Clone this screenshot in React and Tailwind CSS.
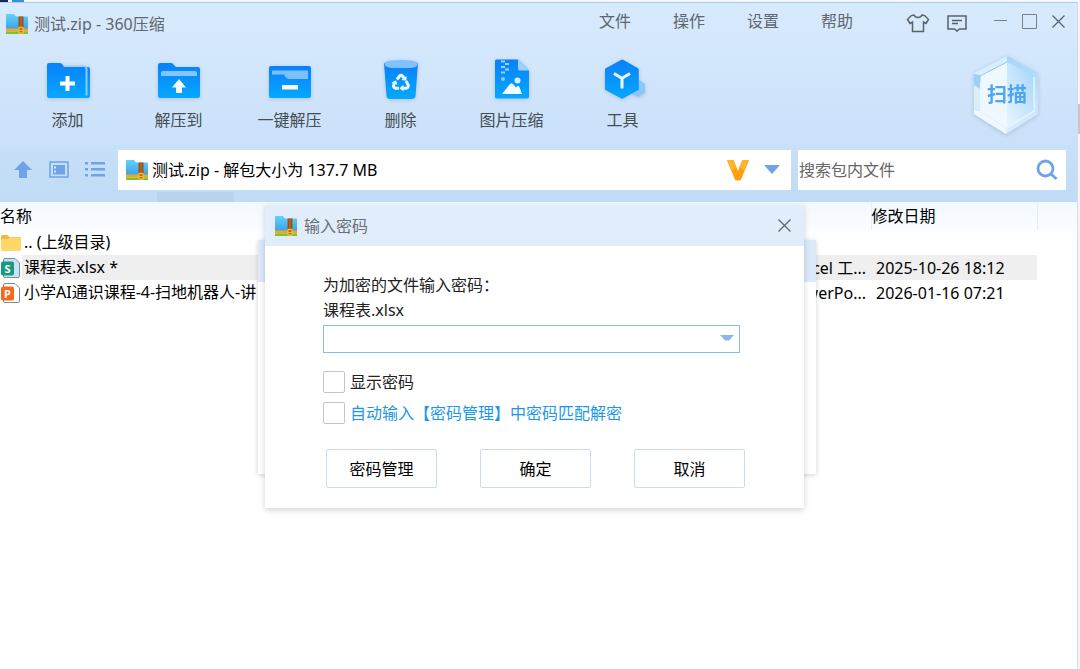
import React, { useState } from 'react';

const ZipIcon = ({ className }) => (
  <svg viewBox="0 0 24 22" className={className} aria-hidden="true">
    <defs>
      <linearGradient id="zipBlue" x1="0" y1="0" x2="0" y2="1">
        <stop offset="0" stopColor="#66d0fa" />
        <stop offset="1" stopColor="#36a0ec" />
      </linearGradient>
    </defs>
    <path d="M1 1.500Q1 1 1.500 1H9l2 2.500h11q1 0 1 1V17H1z" fill="url(#zipBlue)" />
    <path d="M1 15.500h22v3H1z" fill="#f3a51f" />
    <path d="M1 18.500h22V21H1z" fill="#7cc32c" />
    <path d="M13.500 3.500h5V16h-5z" fill="#9a5316" />
    <path d="M15.300 3.500h1.400V15h-1.400z" fill="#b56d26" />
    <rect x="13.200" y="13.800" width="5.600" height="7" rx="1.400" fill="#f6b63c" />
    <rect x="14.600" y="15.400" width="2.800" height="1.300" fill="#8a4a10" />
    <rect x="14.600" y="18" width="2.800" height="1.300" fill="#b9701c" />
  </svg>
);

const AddIcon = () => (
  <>
    <path d="M2 6q0-2 2-2h11q1.500 0 2.500 1.500L19 8h24q2 0 2 2v27q0 2-2 2H4q-2 0-2-2z" fill="url(#toolBlue)" />
    <path d="M19 7.500h18q3.500 0 3.500 3v26h2V10q0-3.500-4-3.500H18z" fill="#8cc8ff" />
    <path d="M20.500 17h4v5.500H30v4h-5.500V32h-4v-5.500H15v-4h5.500z" fill="#fff" />
  </>
);

const ExtractIcon = () => (
  <>
    <path d="M2 6q0-2 2-2h11q1.500 0 2.500 1.500L20 8h22q2 0 2 2v27q0 2-2 2H4q-2 0-2-2z" fill="url(#toolBlue)" />
    <path d="M5 14q0-2 2-2h32q2 0 2 2v3H5z" fill="#82c5ff" />
    <path d="M23 20l7 8.500h-4V34h-6v-5.500h-4z" fill="#f2fbff" />
  </>
);

const QuickIcon = () => (
  <>
    <rect x="2" y="7" width="42" height="32" rx="2" fill="url(#toolBlue)" />
    <path d="M5 12.500q0-1 1-1h34q1 0 1 1V20H22q-2 0-3.500-2L17 15.500H5z" fill="#7dc0ff" />
    <rect x="15" y="26" width="16" height="4.500" rx="0.500" fill="#f2fbff" />
  </>
);

const DeleteIcon = () => (
  <>
    <path d="M6 4h34l-2.500 33q-.3 3-4 3h-21q-3.700 0-4-3z" fill="url(#toolBlue)" />
    <path d="M6.500 4Q8 1 23 1t16.500 3q1 4-6.500 5H13Q6 8 6.500 4z" fill="#82c1ff" />
    <g fill="none" stroke="#e9f8ff" strokeWidth="3">
      <path d="M19 20.500l2.600-3.500q1.400-1.600 2.800 0l1.800 2.400" />
      <path d="M28 22l2 3.500q1 3-2 3.700h-3" />
      <path d="M21 29.200h-3.500q-3-.8-1.500-4l1.500-2.500" />
    </g>
    <path d="M23.500 21l5 .8L28.600 17zM25.500 25.800v6.800l-4-3.400zM13.500 23.700l4.500-2.500 1.400 4.600z" fill="#e9f8ff" />
  </>
);

const ImageZipIcon = () => (
  <>
    <path d="M6 2q0-1.500 1.500-1.500H29L40 11.500V38q0 1.500-1.500 1.500h-31Q6 39.500 6 38z" fill="url(#toolBlue)" />
    <path d="M29 .5l11 11H30.500q-1.500 0-1.500-1.500z" fill="#9bd0ff" />
    <path d="M12 1.500h4v2h-4zM16 4h4v2h-4zM12 7h4v2h-4zM16 9.500h4v2h-4zM12 12.500h4v2h-4z" fill="#9bd4ff" />
    <circle cx="14" cy="20" r="2" fill="#8ccdff" />
    <circle cx="28.500" cy="21.500" r="3" fill="#d5f1ff" />
    <path d="M13 35l8-10q1.500-1.500 3 0l3 3.500 1-1q1.200-1 2.200 0L33 35z" fill="#f2fbff" />
  </>
);

const ToolsIcon = () => (
  <>
    <path d="M36 20l4 1.500 5 3.500v9l-6.500 4-6.500-3z" fill="#8dc5fb" />
    <path d="M21.500.8q.8-.5 1.600 0L38 9.300q.8.500.8 1.500v19q0 1-.8 1.500L23 39.500q-.8.500-1.600 0L5.800 31.300q-.8-.5-.8-1.500v-19q0-1 .8-1.500z" fill="url(#toolBlue)" />
    <path d="M14 14.500l8 4.700 8-4.700M22 19v10.500" fill="none" stroke="#f0faff" strokeWidth="3" />
  </>
);

const tools = [
  { label: '添加', Icon: AddIcon },
  { label: '解压到', Icon: ExtractIcon },
  { label: '一键解压', Icon: QuickIcon },
  { label: '删除', Icon: DeleteIcon },
  { label: '图片压缩', Icon: ImageZipIcon },
  { label: '工具', Icon: ToolsIcon },
];

const menus = ['文件', '操作', '设置', '帮助'];

const FolderIcon = () => (
  <svg viewBox="0 0 22 20" className="h-5 w-[22px]" aria-hidden="true">
    <path d="M1 3.500Q1 2 2.500 2h5L9.500 4H20q1 0 1 1v11.500q0 1-1 1H2q-1 0-1-1z" fill="#f3b93a" />
    <path d="M1 7q0-1 1-1h6l2-1.500h10q1 0 1 1v11q0 1-1 1H2q-1 0-1-1z" fill="#ffd767" />
  </svg>
);

const DocIcon = ({ letter, color, page }) => (
  <svg viewBox="0 0 22 22" className="h-[22px] w-[22px]" aria-hidden="true">
    <path d="M5 1.500h10l4.500 4.500v13q0 1.500-1.500 1.500H5q-1.500 0-1.500-1.500V3q0-1.500 1.500-1.500z" fill={page} stroke="#7d8b98" />
    <rect x="1" y="4.500" width="13" height="14" rx="2" fill={color} />
    <text x="7.500" y="15.500" textAnchor="middle" fill="#fff" className="text-[11px] font-bold">{letter}</text>
  </svg>
);

const files = [
  { name: '.. (上级目录)', type: '', date: '', icon: <FolderIcon /> },
  {
    name: '课程表.xlsx *',
    type: 'Microsoft Excel 工...',
    date: '2025-10-26 18:12',
    selected: true,
    icon: <DocIcon letter="S" color="#159b80" page="#c9e3f6" />,
  },
  {
    name: '小学AI通识课程-4-扫地机器人-讲',
    type: 'Microsoft PowerPo...',
    date: '2026-01-16 07:21',
    icon: <DocIcon letter="P" color="#f26a1b" page="#ffffff" />,
  },
];

function TitleBar() {
  return (
    <div className="flex h-12 items-start pr-[11px] text-[#5f666d]">
      <div className="flex h-[42px] items-center gap-[5px] pl-[5px]">
        <ZipIcon className="h-[22px] w-6" />
        <h1>测试.zip - 360压缩</h1>
      </div>
      <nav className="ml-auto flex h-9 items-center gap-[42px]">
        {menus.map((m) => (
          <button key={m} type="button">{m}</button>
        ))}
      </nav>
      <div className="ml-[53px] flex h-10 items-center gap-[17px]">
        <button type="button" aria-label="皮肤">
          <svg viewBox="0 0 24 22" className="h-[22px] w-6" fill="none" stroke="#5c6166" strokeWidth="1.500">
            <path d="M8 3l-3 .8L1.500 7.500l2.500 4L6.500 10v9.500h11V10l2.500 1.500 2.500-4L19 3.800 16 3q-1 2.500-4 2.500T8 3z" />
          </svg>
        </button>
        <button type="button" aria-label="反馈">
          <svg viewBox="0 0 20 18" className="h-[18px] w-5" fill="none" stroke="#5c6166" strokeWidth="1.500">
            <path d="M1 2h18v13h-6.500L10 17l-2.500-2H1zM5 6.500h10M5 9.500h6" />
          </svg>
        </button>
      </div>
      <div className="ml-[26px] flex h-9 items-center gap-[14px]">
        <button type="button" aria-label="最小化">
          <svg viewBox="0 0 15 15" className="h-[15px] w-[15px]" stroke="#7a8087"><path d="M1 6.500h13" /></svg>
        </button>
        <button type="button" aria-label="最大化">
          <svg viewBox="0 0 15 15" className="h-[15px] w-[15px]" fill="none" stroke="#7a8087"><path d="M.5.500h14v14H.5z" /></svg>
        </button>
        <button type="button" aria-label="关闭">
          <svg viewBox="0 0 15 15" className="h-[15px] w-[15px]" stroke="#5c6166" strokeWidth="1.300"><path d="M1.500 1.500l12 12M13.500 1.500l-12 12" /></svg>
        </button>
      </div>
    </div>
  );
}

function ScanButton() {
  return (
    <button type="button" className="relative mr-8 flex h-20 w-[76px] items-center justify-center drop-shadow-sm">
      <svg viewBox="0 0 76 80" className="absolute inset-0 h-20 w-[76px]" aria-hidden="true">
        <defs>
          <linearGradient id="scanRight" x1="0" y1="1" x2="1" y2="0">
            <stop offset="0" stopColor="#e8f6ff" />
            <stop offset="1" stopColor="#a5d5fa" />
          </linearGradient>
          <linearGradient id="scanRim" x1="0" y1="0" x2="0" y2="1">
            <stop offset="0" stopColor="#a4d6f9" />
            <stop offset="1" stopColor="#d9efff" />
          </linearGradient>
        </defs>
        <path d="M38 1l31 17v41L37 79 5 59V18z" fill="url(#scanRim)" />
        <path d="M38 1L5 18v41l6-5V21l27-14z" fill="#d9effe" />
        <path d="M5 19l6 1v14l-6-4z" fill="#9dd2f8" />
        <path d="M5 56v3l32 20V73L11 56z" fill="#eef8ff" />
        <path d="M38 7L11 21v35l27 17z" fill="#eff8ff" />
        <path d="M38 7l27 14v35L38 73z" fill="url(#scanRight)" />
        <path d="M38 7L11 21v6" fill="none" stroke="#92caf4" />
        <path d="M65 22v34L38 73" fill="none" stroke="#e6f5ff" strokeWidth="1.500" />
      </svg>
      <span className="relative text-xl font-bold text-[#4ea6f0]">扫描</span>
    </button>
  );
}

function Toolbar() {
  return (
    <div className="flex items-start pl-3 text-[#454c53]">
      <svg className="absolute h-0 w-0" aria-hidden="true">
        <defs>
          <linearGradient id="toolBlue" x1="0" y1="0" x2="0" y2="1">
            <stop offset="0" stopColor="#0a80fb" />
            <stop offset="1" stopColor="#04a8ff" />
          </linearGradient>
        </defs>
      </svg>
      {tools.map(({ label, Icon }) => (
        <button key={label} type="button" className="flex w-[111px] flex-col items-center gap-[3px] pt-2">
          <svg viewBox="0 0 46 46" className="h-[46px] w-[46px] drop-shadow-sm" aria-hidden="true"><Icon /></svg>
          <span className="leading-6">{label}</span>
        </button>
      ))}
      <div className="ml-auto pt-1">
        <ScanButton />
      </div>
    </div>
  );
}

function AddressBar() {
  return (
    <div className="mt-[15px] flex h-10 items-center pr-[11px]">
      <div className="flex w-[118px] shrink-0 items-center gap-[14px] pl-3">
        <button type="button" aria-label="上一级">
          <svg viewBox="0 0 22 22" className="h-[22px] w-[22px]" fill="#6fa3e8"><path d="M11 2l9 9h-5v8H7v-8H2z" /></svg>
        </button>
        <button type="button" aria-label="预览">
          <svg viewBox="0 0 22 22" className="h-[22px] w-[22px]">
            <path d="M2 3h18v15H2z" fill="none" stroke="#6fa3e8" strokeWidth="1.500" />
            <path d="M5 6h12v9.500H5z" fill="#6fa3e8" />
            <path d="M6 7.500h2v2H6zM6 11.500h2v2H6z" fill="#d5e7fc" />
          </svg>
        </button>
        <button type="button" aria-label="列表">
          <svg viewBox="0 0 22 22" className="h-[22px] w-[22px]" fill="#6fa3e8">
            <path d="M1 3h3v2.500H1zM7 3h14v2.500H7zM1 9h3v2.500H1zM7 9h14v2.500H7zM1 15h3v2.500H1zM7 15h14v2.500H7z" />
          </svg>
        </button>
      </div>
      <div className="flex h-10 flex-1 items-center bg-white pl-[7px] pr-2 text-black">
        <ZipIcon className="mr-[3px] h-6 w-6" />
        <span>测试.zip - 解包大小为 137.7 MB</span>
        <svg viewBox="0 0 22 22" className="ml-auto h-[22px] w-[22px]" aria-hidden="true">
          <path d="M0 1h6.500L11 12l4.500-11H22l-8 19.500q-.5 1-1.500 1h-3q-1 0-1.500-1z" fill="#ff9d0c" />
          <path d="M0 1h6.500l3 7.500-5 4zM15.500 1H22l-4.500 11-5-4z" fill="#ffb42c" />
        </svg>
        <button type="button" aria-label="展开路径" className="ml-3">
          <svg viewBox="0 0 22 22" className="h-[22px] w-[22px]" fill="#6fa3ec"><path d="M3 6h16l-8 9z" /></svg>
        </button>
      </div>
      <div className="ml-[7px] flex h-10 w-[268px] items-center bg-white pr-2">
        <input type="search" aria-label="搜索包内文件" placeholder="搜索包内文件" className="min-w-0 flex-1 pl-px outline-none placeholder:text-[#666]" />
        <button type="button" aria-label="搜索">
          <svg viewBox="0 0 22 22" className="h-[22px] w-[22px]" fill="none" stroke="#6fa3ec">
            <circle cx="9.500" cy="9.500" r="7.500" strokeWidth="2.800" />
            <path d="M15 15l5.500 5" strokeWidth="2.800" />
          </svg>
        </button>
      </div>
    </div>
  );
}

function FileTable() {
  return (
    <div className="flex-1 bg-linear-to-b from-[#f2f8fe] to-white to-[40px]">
      <table className="w-full table-fixed text-left text-black">
        <colgroup>
          <col />
          <col className="w-[167px]" />
          <col className="w-[166px]" />
          <col className="w-10" />
        </colgroup>
        <thead>
          <tr className="h-7">
            <th className="p-0 font-normal leading-6">名称</th>
            <th className="p-0" aria-label="类型"></th>
            <th className="border-x border-[#e3eef9] p-0 font-normal leading-6">修改日期</th>
            <td></td>
          </tr>
        </thead>
        <tbody>
          {files.map((f) => (
            <tr key={f.name} className="h-[25px] leading-6">
              <td className="p-0">
                <div className="flex h-[25px] items-center">
                  <span className="w-[22px] shrink-0">{f.icon}</span>
                  <span className={`h-[25px] flex-1 truncate pl-0.5 ${f.selected ? 'bg-[#efefef]' : ''}`}>{f.name}</span>
                </div>
              </td>
              <td className={`whitespace-nowrap p-0 pr-[5px] text-right ${f.selected ? 'bg-[#efefef]' : ''}`}>{f.type}</td>
              <td className={`whitespace-nowrap p-0 pl-[5px] ${f.selected ? 'bg-[#efefef]' : ''}`}>{f.date}</td>
              <td></td>
            </tr>
          ))}
        </tbody>
      </table>
    </div>
  );
}

function PasswordDialog() {
  const [password, setPassword] = useState('');
  const [visible, setVisible] = useState(false);

  const checkbox = 'h-[22px] w-[22px] appearance-none rounded-[2px] border border-[#c4c4c4] bg-white checked:bg-[#4ea6f0]';
  const button = 'h-[39px] w-[111px] rounded-[2px] border border-[#c9dcf3] bg-white text-black';

  return (
    <section role="dialog" aria-labelledby="pwdTitle" className="w-[539px] bg-white shadow-[0_2px_6px_rgba(0,0,0,0.18)]">
      <header className="flex h-[41px] items-center bg-[#e1edfb] pl-[9px] pr-3">
        <ZipIcon className="mr-[6px] h-[22px] w-6" />
        <h2 id="pwdTitle" className="text-[#686f76]">输入密码</h2>
        <button type="button" aria-label="关闭" className="ml-auto">
          <svg viewBox="0 0 15 15" className="h-[15px] w-[15px]" stroke="#5f666d" strokeWidth="1.300"><path d="M1.500 1.500l12 12M13.500 1.500l-12 12" /></svg>
        </button>
      </header>
      <form onSubmit={(e) => e.preventDefault()} className="px-[58px] pb-5 pt-[27px] text-[#222]">
        <label htmlFor="pwd" className="block leading-[25px]">
          为加密的文件输入密码：
          <span className="block">课程表.xlsx</span>
        </label>
        <div className="mr-[6px] mt-0.5 flex h-7 items-center border border-[#86bfe6]">
          <input
            id="pwd"
            type={visible ? 'text' : 'password'}
            value={password}
            onChange={(e) => setPassword(e.target.value)}
            className="h-full min-w-0 flex-1 px-2 outline-none"
          />
          <button type="button" aria-label="历史密码" className="mr-1">
            <svg viewBox="0 0 16 16" className="h-4 w-4" fill="#8bb8ea"><path d="M1 4h14l-5 5.500H6z" /></svg>
          </button>
        </div>
        <div className="mt-[18px] flex h-[22px] items-center gap-[5px]">
          <input id="show" type="checkbox" checked={visible} onChange={(e) => setVisible(e.target.checked)} className={checkbox} />
          <label htmlFor="show">显示密码</label>
        </div>
        <div className="mt-[9px] flex h-[22px] items-center gap-[5px]">
          <input id="auto" type="checkbox" className={checkbox} />
          <label htmlFor="auto" className="text-[#1a97ea]">自动输入【密码管理】中密码匹配解密</label>
        </div>
        <div className="mt-[25px] flex justify-between pl-[3px] pr-px">
          <button type="button" className={button}>密码管理</button>
          <button type="submit" className={button}>确定</button>
          <button type="button" className={button}>取消</button>
        </div>
      </form>
    </section>
  );
}

export default function App() {
  return (
    <div className="flex min-h-screen flex-col bg-white font-['Noto_Sans','Noto_Sans_CJK_SC',sans-serif] text-base leading-6">
      {/* edge of the window behind */}
      <div className="flex h-0.5 bg-[#f4f7fb]">
        <span className="w-2 bg-[#15275a]" />
        <span className="ml-1 w-3 bg-[#3a8fd6]" />
      </div>
      <div className="flex flex-1">
        <main className="relative flex min-w-0 flex-1 flex-col overflow-hidden border-r border-[#cfe0ec]">
          <div className="border-t border-[#a9cfe6] bg-linear-to-b from-[#d8eafd] via-[#cfe4fb] to-[#bfdbf5]">
            <TitleBar />
            <Toolbar />
            <AddressBar />
            <div className="flex h-3 pt-0.5">
              <span className="ml-[157px] w-[77px] bg-[#b8d4f0]" />
            </div>
          </div>
          <FileTable />
          <div className="absolute inset-x-0 top-[238px] flex justify-center pr-[3px]">
            <div className="h-[234px] w-[558px] bg-white shadow-[0_1px_5px_rgba(0,0,0,0.18)]">
              <div className="h-[42px] bg-[#dce9f9]" />
            </div>
          </div>
          <div className="absolute inset-x-0 top-[203px] flex justify-center pr-2">
            <PasswordDialog />
          </div>
        </main>
        <aside className="flex w-0.5 flex-col bg-[#f4f4f4]">
          <span className="mt-[102px] h-[30px] bg-[#c4c6c9]" />
        </aside>
      </div>
    </div>
  );
}
